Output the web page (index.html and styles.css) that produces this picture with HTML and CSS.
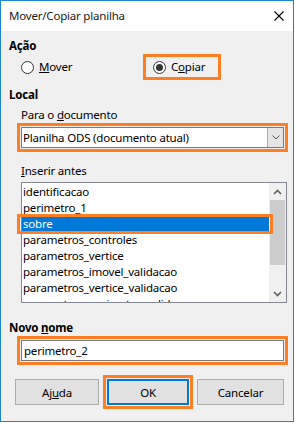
FILE: index.html
```html
<!DOCTYPE html>
<html lang="pt-BR">
<head>
  <meta charset="UTF-8" />
  <title>Mover/Copiar planilha</title>
  <link rel="stylesheet" href="styles.css">
</head>
<body>
  <div class="dialog">
    <div class="titlebar">
      <span class="title">Mover/Copiar planilha</span>
      <svg class="close" width="10" height="10" viewBox="0 0 10 10">
        <path d="M0.5 0.5 L9.5 9.5 M9.5 0.5 L0.5 9.5" stroke="#000" stroke-width="1.1" fill="none"/>
      </svg>
    </div>

    <div class="content">
      <div class="group-title">Ação</div>
      <div class="radio-row">
        <label class="radio-option mover">
          <span class="radio"></span>
          <span><u>M</u>over</span>
        </label>
        <div class="mark copy-mark">
          <label class="radio-option">
            <span class="radio checked"></span>
            <span>C<u>o</u>piar</span>
          </label>
        </div>
      </div>

      <div class="group-title local">Local</div>
      <div class="field-label">Para o <u>d</u>ocumento</div>
      <div class="mark field-mark">
        <div class="combo">
          <span class="combo-text">Planilha ODS (documento atual)</span>
          <span class="combo-btn">
            <svg width="8" height="5" viewBox="0 0 8 5">
              <path d="M0.5 0.5 L4 4 L7.5 0.5" stroke="#555" stroke-width="1" fill="none"/>
            </svg>
          </span>
        </div>
      </div>

      <div class="field-label insert-label"><u>I</u>nserir antes</div>
      <div class="listbox">
        <ul class="items">
          <li>identificacao</li>
          <li>perimetro_1</li>
          <li class="selected">sobre<span class="mark list-mark"></span></li>
          <li>parametros_controles</li>
          <li>parametros_vertice</li>
          <li>parametros_imovel_validacao</li>
          <li>parametros_vertice_validacao</li>
          <li>parametros_perimetro_validacao</li>
        </ul>
        <div class="scrollbar">
          <span class="arrow">
            <svg width="9" height="6" viewBox="0 0 9 6">
              <path d="M1 5 L4.5 1.5 L8 5" stroke="#606060" stroke-width="1.6" fill="none"/>
            </svg>
          </span>
          <span class="thumb"></span>
          <span class="track"></span>
          <span class="arrow">
            <svg width="9" height="6" viewBox="0 0 9 6">
              <path d="M1 1 L4.5 4.5 L8 1" stroke="#606060" stroke-width="1.6" fill="none"/>
            </svg>
          </span>
        </div>
      </div>

      <div class="group-title name-title">Novo <u>n</u>ome</div>
      <div class="mark field-mark">
        <div class="textbox">perimetro_2</div>
      </div>

      <div class="buttons">
        <button class="btn help">Aj<u>u</u>da</button>
        <div class="mark ok-mark">
          <button class="btn ok">OK</button>
        </div>
        <button class="btn cancel">Cancelar</button>
      </div>
    </div>
  </div>
</body>
</html>
```

FILE: styles.css
```css
body {
  margin: 0;
  background-color: #fff;
  font-family: "Noto Sans", "Open Sans", sans-serif;
  font-size: 11.5px;
  letter-spacing: -0.2px;
  line-height: 16px;
  color: #000;
}

.dialog {
  width: 294px;
  height: 422px;
  box-sizing: border-box;
  border: 1px solid #1c84d4;
  background-color: #f0f0f0;
  display: flex;
  flex-direction: column;
}

.titlebar {
  height: 30px;
  background-color: #fff;
  display: flex;
  align-items: center;
  justify-content: space-between;
  padding: 0 9px 0 8px;
}

.title {
  color: #1a1a1a;
}

.content {
  padding: 7px 0 0 8px;
}

u {
  text-decoration: underline;
  text-underline-offset: 1px;
}

.group-title {
  font-weight: bold;
  height: 16px;
}

.local {
  margin-top: 7px;
}

.name-title {
  margin-top: 17px;
}

/* orange annotation frames */
.mark {
  border: 3px solid #fd7e23;
  box-sizing: border-box;
}

.radio-row {
  height: 26px;
  display: flex;
  align-items: center;
}

.radio-option {
  display: flex;
  align-items: center;
  gap: 5px;
}

.mover {
  margin-left: 12px;
  width: 122px;
}

.copy-mark {
  width: 78px;
  height: 26px;
  display: flex;
  align-items: center;
  padding-left: 7px;
}

.radio {
  width: 13px;
  height: 13px;
  box-sizing: border-box;
  border: 1px solid #333;
  border-radius: 50%;
  background-color: #fff;
  display: flex;
  align-items: center;
  justify-content: center;
}

.radio.checked::after {
  content: "";
  width: 7px;
  height: 7px;
  border-radius: 50%;
  background-color: #333;
}

.field-label {
  margin: 4px 0 0 12px;
  height: 16px;
}

.insert-label {
  margin-top: 11px;
}

.field-mark {
  width: 271px;
  height: 29px;
  margin-left: 8px;
  padding: 1px;
}

.combo,
.textbox {
  height: 21px;
  box-sizing: border-box;
  border: 1px solid #7a7a7a;
  background-color: #fff;
  display: flex;
  align-items: center;
  padding-left: 1px;
}

.combo-text {
  flex: 1;
}

.combo-btn {
  width: 16px;
  height: 19px;
  box-sizing: border-box;
  border-left: 1px solid #adadad;
  background-color: #e5e5e5;
  display: flex;
  align-items: center;
  justify-content: center;
}

.listbox {
  position: relative;
  width: 266px;
  height: 121px;
  box-sizing: border-box;
  margin: 3px 0 0 12px;
  border: 1px solid #828790;
  background-color: #fff;
  display: flex;
}

.items {
  list-style: none;
  margin: 0;
  padding: 1px 0 0 0;
  flex: 1;
  overflow: hidden;
}

.items li {
  height: 16px;
  padding-left: 1px;
  white-space: nowrap;
}

.items li.selected {
  background-color: #0078d7;
  color: #fff;
}

.list-mark {
  position: absolute;
  left: -5px;
  top: 31px;
  width: 256px;
  height: 20px;
}

.scrollbar {
  width: 17px;
  background-color: #f0f0f0;
  display: flex;
  flex-direction: column;
}

.arrow {
  height: 17px;
  display: flex;
  align-items: center;
  justify-content: center;
}

.thumb {
  height: 65px;
  margin: 0 1px;
  background-color: #cdcdcd;
}

.track {
  flex: 1;
}

.textbox {
  padding-left: 2px;
}

.buttons {
  margin-top: 10px;
  margin-left: 6px;
  height: 34px;
  display: flex;
  align-items: center;
  gap: 4px;
}

.btn {
  height: 26px;
  box-sizing: border-box;
  border: 1px solid #adadad;
  background-color: #e1e1e1;
  font-family: inherit;
  font-size: inherit;
  letter-spacing: inherit;
  color: #000;
  padding: 0;
}

.help {
  width: 84px;
}

.cancel {
  width: 87px;
}

.ok-mark {
  width: 90px;
  height: 34px;
  padding: 1px;
}

.ok {
  width: 100%;
  height: 26px;
  border: 2px solid #0078d7;
}
```
